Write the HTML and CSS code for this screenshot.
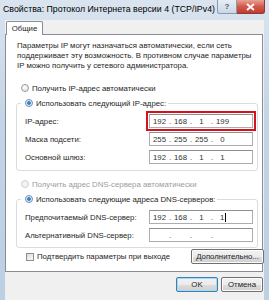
FILE: index.html
```html
<!DOCTYPE html>
<html lang="ru">
<head>
    <meta charset="UTF-8">
    <meta name="viewport" content="width=device-width, initial-scale=1.0">
    <title>Свойства: Протокол Интернета версии 4 (TCP/IPv4)</title>
    <link rel="stylesheet" href="styles.css">
</head>
<body>
    <div class="window">
        <!-- заголовок окна -->
        <div class="titlebar">
            <span class="title">Свойства: Протокол Интернета версии 4 (TCP/IPv4)</span>
            <div class="caption-btns">
                <span class="cap-btn help">?</span>
                <span class="cap-btn close">
                    <svg width="9" height="8" viewBox="0 0 9 8">
                        <path d="M1 1 L8 7 M8 1 L1 7" stroke="#fff" stroke-width="1.8" fill="none"/>
                    </svg>
                </span>
            </div>
        </div>

        <div class="client">
            <div class="tabs">
                <span class="tab">Общие</span>
            </div>

            <div class="panel">
                <p class="intro">Параметры IP могут назначаться автоматически, если сеть<br>поддерживает эту возможность. В противном случае параметры<br>IP можно получить у сетевого администратора.</p>

                <div class="radio-row first">
                    <span class="radio"></span>
                    <span>Получить IP-адрес автоматически</span>
                </div>

                <fieldset class="group ip-group">
                    <legend class="radio-row">
                        <span class="radio checked"></span>
                        <span>Использовать следующий IP-адрес:</span>
                    </legend>
                    <div class="field-row">
                        <span>IP-адрес:</span>
                        <span class="ip-box highlight">
                            <span class="seg">192</span><span class="dot">.</span><span class="seg">168</span><span class="dot">.</span><span class="seg">1</span><span class="dot">.</span><span class="seg">199</span>
                        </span>
                    </div>
                    <div class="field-row">
                        <span>Маска подсети:</span>
                        <span class="ip-box">
                            <span class="seg">255</span><span class="dot">.</span><span class="seg">255</span><span class="dot">.</span><span class="seg">255</span><span class="dot">.</span><span class="seg">0</span>
                        </span>
                    </div>
                    <div class="field-row">
                        <span>Основной шлюз:</span>
                        <span class="ip-box">
                            <span class="seg">192</span><span class="dot">.</span><span class="seg">168</span><span class="dot">.</span><span class="seg">1</span><span class="dot">.</span><span class="seg">1</span>
                        </span>
                    </div>
                </fieldset>

                <div class="radio-row disabled dns-auto">
                    <span class="radio"></span>
                    <span>Получить адрес DNS-сервера автоматически</span>
                </div>

                <fieldset class="group dns-group">
                    <legend class="radio-row">
                        <span class="radio checked"></span>
                        <span>Использовать следующие адреса DNS-серверов:</span>
                    </legend>
                    <div class="field-row">
                        <span>Предпочитаемый DNS-сервер:</span>
                        <span class="ip-box">
                            <span class="seg">192</span><span class="dot">.</span><span class="seg">168</span><span class="dot">.</span><span class="seg">1</span><span class="dot">.</span><span class="seg caret">1</span>
                        </span>
                    </div>
                    <div class="field-row">
                        <span>Альтернативный DNS-сервер:</span>
                        <span class="ip-box">
                            <span class="seg"></span><span class="dot">.</span><span class="seg"></span><span class="dot">.</span><span class="seg"></span><span class="dot">.</span><span class="seg"></span>
                        </span>
                    </div>
                </fieldset>

                <div class="confirm-row">
                    <span class="check-label">
                        <span class="checkbox"></span>
                        <span>Подтвердить параметры при выходе</span>
                    </span>
                    <button class="btn advanced">Дополнительно...</button>
                </div>
            </div>

            <!-- кнопки диалога -->
            <div class="footer">
                <button class="btn default">OK</button>
                <button class="btn">Отмена</button>
            </div>
        </div>
    </div>
</body>
</html>
```

FILE: styles.css
```css
/* окно */
body {
    margin: 0;
    font-family: "Liberation Sans", Arial, sans-serif;
    font-size: 7.8px;
    color: #262626;
}
.window {
    width: 269px;
    height: 300px;
    background: linear-gradient(#d9e4ef, #c3d4e6 40%, #bccfe3);
    display: flex;
    flex-direction: column;
}

/* заголовок */
.titlebar {
    height: 20px;
    display: flex;
    justify-content: space-between;
    align-items: flex-start;
    padding-left: 3px;
}
.title {
    font-size: 8.8px;
    line-height: 18px;
    color: #000;
}
.caption-btns {
    display: flex;
    margin-right: 4px;
}
.cap-btn {
    height: 13px;
    display: flex;
    align-items: center;
    justify-content: center;
    border: 1px solid #8a9bb0;
    border-top: none;
}
.help {
    width: 18px;
    border-radius: 0 0 0 3px;
    background: linear-gradient(#e6edf5, #cbd8e6);
    color: #4d5d73;
    font-size: 8px;
    font-weight: bold;
}
.close {
    width: 27px;
    border-left: none;
    border-color: #8b3a3a;
    border-radius: 0 0 3px 0;
    background: linear-gradient(#e8a193, #d2594a 50%, #c23b2c);
}

/* клиентская область */
.client {
    flex: 1;
    margin: 0 5px;
    background: #f0f0f0;
    display: flex;
    flex-direction: column;
}
.tabs {
    display: flex;
    padding: 1px 0 0 1px;
}
.tab {
    width: 35px;
    height: 13px;
    background: #fff;
    border: 1px solid #898c95;
    border-bottom: none;
    border-radius: 2px 2px 0 0;
    text-align: center;
    line-height: 13px;
    margin-bottom: -1px;
    position: relative;
    z-index: 1;
}
.panel {
    height: 238px;
    background: #fff;
    border: 1px solid #898c95;
    margin-right: 1px;
    padding: 6px 5px 0 11px;
    box-sizing: border-box;
}
.intro {
    margin: 0;
    line-height: 10px;
    white-space: nowrap;
}

/* переключатели */
.radio-row {
    display: flex;
    align-items: center;
    gap: 3px;
    height: 12px;
    padding-left: 4px;
    white-space: nowrap;
}
.radio-row.first {
    margin-top: 11px;
}
.radio {
    width: 6px;
    height: 6px;
    flex: none;
    border-radius: 50%;
    border: 1px solid #9a9a9a;
    background: radial-gradient(circle at 40% 35%, #fff, #dcdcdc);
}
.radio.checked {
    background: radial-gradient(circle, #2a6fc0 0, #4d93d9 1.6px, #cfe0f1 2.2px, #f2f2f2 3px);
    border-color: #6c8fb5;
}
.disabled {
    color: #9c9c9c;
}
.disabled .radio {
    border-color: #cfcfcf;
    background: #f4f4f4;
}
.dns-auto {
    margin-top: 7px;
}

/* группы */
.group {
    margin: 3px 0 0 -1px;
    width: 242px;
    box-sizing: border-box;
    border: 1px solid #dcdcdc;
    border-radius: 3px;
    padding: 3px 4px 4px 8px;
}
.group legend {
    padding: 0 2px 0 4px;
    margin-left: -4px;
}
.dns-group {
    padding-bottom: 3px;
}
.field-row {
    height: 18px;
    display: flex;
    align-items: center;
    justify-content: space-between;
}

/* поле IP-адреса */
.ip-box {
    width: 104px;
    height: 14px;
    box-sizing: border-box;
    border: 1px solid #abadb3;
    border-top-color: #8e8f8f;
    background: #fff;
    display: flex;
    align-items: center;
    padding-left: 2px;
    color: #333;
}
.ip-box.highlight {
    outline: 2px solid #d3121c;
    outline-offset: 1px;
}
.seg {
    width: 15px;
    text-align: center;
}
.dot {
    width: 6px;
    text-align: center;
}
.caret {
    border-right: 1px solid #000;
    width: auto;
    margin-left: 5px;
    padding-right: 1px;
}

/* нижняя строка вкладки */
.confirm-row {
    margin-top: 1px;
    height: 15px;
    display: flex;
    align-items: center;
    justify-content: space-between;
    padding-left: 9px;
    width: 238px;
}
.check-label {
    display: flex;
    align-items: center;
    gap: 3px;
}
.checkbox {
    width: 6px;
    height: 6px;
    border: 1px solid #8e8f8f;
    background: linear-gradient(135deg, #dcdcdc, #fbfbfb);
}

/* кнопки */
.btn {
    font-family: inherit;
    font-size: 7.8px;
    color: #1e1e1e;
    height: 15px;
    padding: 0;
    border: 1px solid #707070;
    border-radius: 2px;
    background: linear-gradient(#f2f2f2 0, #ebebeb 50%, #dddddd 51%, #cfcfcf 100%);
    box-shadow: inset 0 0 0 1px #fcfcfc;
}
.advanced {
    width: 73px;
}
.footer {
    display: flex;
    justify-content: flex-end;
    gap: 3px;
    padding: 5px 1px 0 0;
}
.footer .btn {
    width: 42px;
}
.btn.default {
    border-color: #3c7fb1;
    box-shadow: inset 0 0 0 1px #a6d8f5;
}
```
